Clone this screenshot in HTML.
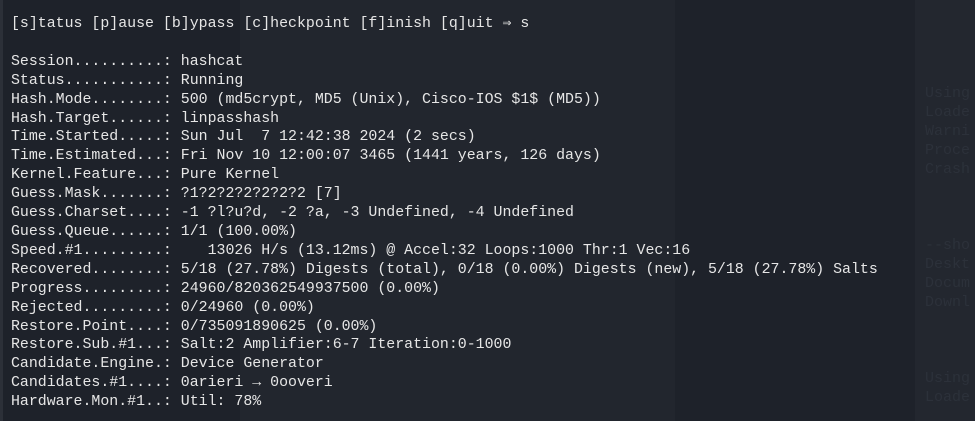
<html><head><style>
body{margin:0;width:975px;height:421px;overflow:hidden;background:#1e222a;position:relative}
.bg{position:absolute;left:240px;top:0;width:435px;height:421px;background:#22262e}
.rp{position:absolute;left:915px;top:0;width:60px;height:421px;background:#23272f}
.lb{position:absolute;left:0;top:0;width:3px;height:421px;background:#2c3038}
pre{position:absolute;left:11px;top:15px;margin:0;font-family:"Liberation Mono",monospace;font-size:14.9px;line-height:18.9px;color:#e6e6e6}
.f{position:absolute;font-family:"Liberation Mono",monospace;font-size:15px;line-height:19px;color:#2c313a;left:925px;top:84px;margin:0}
</style></head><body>
<div class="bg"></div><div class="rp"></div><div class="lb"></div>
<pre class="f">Using
Loade
Warni
Proce
Crash



--sho
Deskt
Docum
Downl



Using
Loade</pre>
<pre>[s]tatus [p]ause [b]ypass [c]heckpoint [f]inish [q]uit ⇒ s

Session..........: hashcat
Status...........: Running
Hash.Mode........: 500 (md5crypt, MD5 (Unix), Cisco-IOS $1$ (MD5))
Hash.Target......: linpasshash
Time.Started.....: Sun Jul  7 12:42:38 2024 (2 secs)
Time.Estimated...: Fri Nov 10 12:00:07 3465 (1441 years, 126 days)
Kernel.Feature...: Pure Kernel
Guess.Mask.......: ?1?2?2?2?2?2?2 [7]
Guess.Charset....: -1 ?l?u?d, -2 ?a, -3 Undefined, -4 Undefined
Guess.Queue......: 1/1 (100.00%)
Speed.#1.........:    13026 H/s (13.12ms) @ Accel:32 Loops:1000 Thr:1 Vec:16
Recovered........: 5/18 (27.78%) Digests (total), 0/18 (0.00%) Digests (new), 5/18 (27.78%) Salts
Progress.........: 24960/820362549937500 (0.00%)
Rejected.........: 0/24960 (0.00%)
Restore.Point....: 0/735091890625 (0.00%)
Restore.Sub.#1...: Salt:2 Amplifier:6-7 Iteration:0-1000
Candidate.Engine.: Device Generator
Candidates.#1....: 0arieri → 0ooveri
Hardware.Mon.#1..: Util: 78%</pre>
</body></html>
